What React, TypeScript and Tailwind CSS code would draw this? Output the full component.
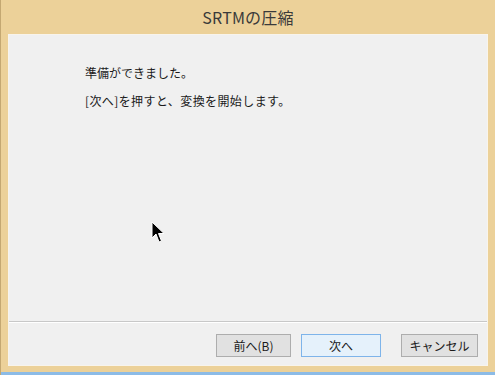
import React from "react";

const jp = { fontFamily: '"Noto Sans CJK JP", "Noto Sans", sans-serif' };

function Cursor() {
  return (
    <svg width="14" height="24" viewBox="0 0 14 24" className="absolute left-[150px] top-[221px]">
      <path d="M1 1 L1 17 L5 13 L8 21 L10.5 20 L7.5 12.5 L13 12.5 Z" fill="#000" stroke="#fff" strokeWidth="1" strokeLinejoin="miter" />
    </svg>
  );
}

export default function App() {
  return (
    <div className="relative w-[495px] h-[375px] overflow-hidden bg-[#ecd199] border-l border-[#c4a872] flex flex-col" style={jp}>
      <div className="h-[34px] flex items-center justify-center text-[16px] text-[#3a3a3a] tracking-[0.2px]">
        SRTMの圧縮
      </div>
      <div className="mx-[7px] h-[332px] border border-[#f8f4ec] bg-[#f0f0f0] flex flex-col">
        <div className="flex-1 pl-[76px] pt-[30px] text-[12px] text-[#1a1a1a] leading-[16px] flex flex-col gap-[12px]">
          <div>準備ができました。</div>
          <div className="tracking-[0.4px]">[次へ]を押すと、変換を開始します。</div>
        </div>
        <div className="h-[2px] border-t border-[#c8c8c8] border-b-white border-b"></div>
        <div className="h-[42px] flex items-start pt-[11px] pl-[207px] text-[12px] text-[#1a1a1a]">
          <button className="w-[75px] h-[23px] border border-[#adadad] bg-[#e1e1e1] flex items-center justify-center leading-none">前へ(B)</button>
          <button className="ml-[10px] w-[80px] h-[23px] border border-[#7eb4ea] bg-[#e5f1fb] flex items-center justify-center leading-none">次へ</button>
          <button className="ml-[20px] w-[77px] h-[23px] border border-[#adadad] bg-[#e1e1e1] flex items-center justify-center leading-none">キャンセル</button>
        </div>
      </div>
      <div className="h-[6px]"></div>
      <div className="flex-1 bg-[#8cbbe6]"></div>
      <Cursor />
    </div>
  );
}
